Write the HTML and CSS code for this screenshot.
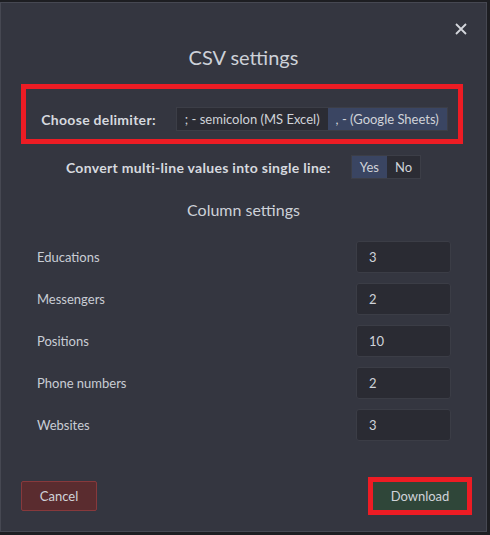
FILE: index.html
```html
<!DOCTYPE html>
<html lang="en">
<head>
<meta charset="UTF-8">
<meta name="viewport" content="width=device-width, initial-scale=1.0">
<title>CSV settings</title>
<link rel="stylesheet" href="styles.css">
</head>
<body>

<div class="modal">
    <div class="close-row">
        <button class="close" aria-label="Close">
            <svg width="12" height="12" viewBox="0 0 12 12"><path d="M1 1 L11 11 M11 1 L1 11" stroke="#d4d6dc" stroke-width="1.8" fill="none"/></svg>
        </button>
    </div>
    <h2 class="title">CSV settings</h2>

    <div class="option-row delimiter">
        <span class="option-label">Choose delimiter:</span>
        <div class="segmented">
            <button class="segment">; - semicolon (MS Excel)</button>
            <button class="segment active">, - (Google Sheets)</button>
        </div>
    </div>

    <div class="option-row multiline">
        <span class="option-label">Convert multi-line values into single line:</span>
        <div class="segmented">
            <button class="segment active">Yes</button>
            <button class="segment">No</button>
        </div>
    </div>

    <h3 class="subtitle">Column settings</h3>

    <div class="columns">
        <div class="column-row"><span>Educations</span><input type="text" value="3"></div>
        <div class="column-row"><span>Messengers</span><input type="text" value="2"></div>
        <div class="column-row"><span>Positions</span><input type="text" value="10"></div>
        <div class="column-row"><span>Phone numbers</span><input type="text" value="2"></div>
        <div class="column-row"><span>Websites</span><input type="text" value="3"></div>
    </div>

    <div class="footer">
        <button class="btn btn-cancel">Cancel</button>
        <button class="btn btn-download">Download</button>
    </div>
</div>

</body>
</html>
```

FILE: styles.css
```css
body {
    font-family: Lato, "Open Sans", sans-serif;
    margin: 0;
    padding: 0;
    background-color: #1d1e22;
    color: #c9cdd5;
}

.modal {
    box-sizing: border-box;
    width: 487px;
    height: 530px;
    margin-top: 2px;
    background-color: #343640;
    border: 1px solid #464852;
    padding-bottom: 19px;
}

.close-row {
    display: flex;
    justify-content: flex-end;
    padding: 20px 19px 0 0;
}

.close {
    background: none;
    border: none;
    padding: 0;
    width: 12px;
    height: 12px;
    cursor: pointer;
    display: block;
}

.close svg {
    display: block;
}

.title {
    margin: 10px 0 0;
    text-align: center;
    font-size: 20px;
    line-height: 24px;
    font-weight: 400;
    color: #cdd1d8;
}

.option-row {
    display: flex;
    justify-content: center;
    align-items: center;
    gap: 20px;
}

.delimiter {
    margin: 20px 28px 0 25px;
    padding: 18px 0 8px 5px;
    outline: 5px solid #ed1c24;
}

.multiline {
    margin-top: 16px;
}

.option-label {
    font-size: 14px;
    font-weight: 700;
    letter-spacing: 0.3px;
    color: #d6d9df;
}

.segmented {
    display: flex;
    height: 24px;
    border: 1px solid #3c3e47;
    box-sizing: border-box;
}

.segment {
    font-family: inherit;
    font-size: 13px;
    color: #d0d3d9;
    background-color: #2b2c34;
    border: none;
    padding: 0 8px;
    height: 22px;
    cursor: pointer;
}

.segment.active {
    background-color: #3a4562;
}

.subtitle {
    margin: 21px 0 0;
    text-align: center;
    font-size: 16px;
    line-height: 20px;
    font-weight: 400;
    color: #cdd1d8;
}

.columns {
    margin-top: 21px;
    padding: 0 35px 0 36px;
    display: flex;
    flex-direction: column;
    gap: 10px;
}

.column-row {
    display: flex;
    justify-content: space-between;
    align-items: center;
    font-size: 13px;
}

.column-row input {
    box-sizing: border-box;
    width: 95px;
    height: 32px;
    padding: 0 12px;
    background-color: #2a2b33;
    border: 1px solid #3b3d46;
    border-radius: 3px;
    color: #cfd3da;
    font-family: inherit;
    font-size: 13px;
}

.footer {
    display: flex;
    justify-content: space-between;
    align-items: center;
    margin-top: 40px;
    padding: 0 19px 0 20px;
    height: 30px;
}

.btn {
    font-family: inherit;
    font-size: 13px;
    color: #d0d3d9;
    cursor: pointer;
}

.btn-cancel {
    width: 76px;
    height: 30px;
    background-color: #5a2c2f;
    border: 1px solid #87393c;
    border-radius: 2px;
}

.btn-download {
    width: 94px;
    height: 28px;
    background-color: #2f4639;
    border: none;
    outline: 5px solid #ed1c24;
}
```
